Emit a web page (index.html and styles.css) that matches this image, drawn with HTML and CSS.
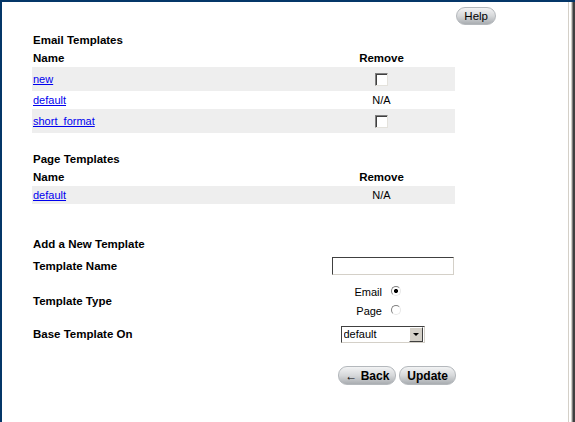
FILE: index.html
```html
<!DOCTYPE html>
<html lang="en">
<head>
    <meta charset="UTF-8">
    <title>Templates</title>
    <link rel="stylesheet" href="styles.css">
</head>
<body>

<div class="window">
    <div class="page">
        <div class="help-row">
            <button class="pill">Help</button>
        </div>

        <div class="section-title">Email Templates</div>
        <table class="list">
            <tr><th class="col-name">Name</th><th class="col-remove">Remove</th></tr>
            <tr class="shade"><td><a href="#">new</a></td><td class="c"><input type="checkbox" class="check"></td></tr>
            <tr class="text-row"><td><a href="#">default</a></td><td class="c">N/A</td></tr>
            <tr class="shade"><td><a href="#">short_format</a></td><td class="c"><input type="checkbox" class="check"></td></tr>
        </table>

        <div class="section-title page-title">Page Templates</div>
        <table class="list">
            <tr><th class="col-name">Name</th><th class="col-remove">Remove</th></tr>
            <tr class="shade text-row"><td><a href="#">default</a></td><td class="c">N/A</td></tr>
        </table>

        <div class="section-title add-title">Add a New Template</div>
        <form class="new-form" onsubmit="return false">
            <div class="form-row name-row">
                <label class="form-label">Template Name</label>
                <div class="form-control right"><input type="text" class="text-input"></div>
            </div>
            <div class="form-row type-row">
                <label class="form-label">Template Type</label>
                <div class="form-control">
                    <label class="radio-line">Email <input type="radio" name="type" class="radio" checked></label>
                    <label class="radio-line">Page <input type="radio" name="type" class="radio"></label>
                </div>
            </div>
            <div class="form-row base-row">
                <label class="form-label">Base Template On</label>
                <div class="form-control center">
                    <div class="select-box">
                        <select class="select">
                            <option>default</option>
                            <option>short_format</option>
                            <option>new</option>
                        </select>
                        <span class="select-btn"><span class="arrow"></span></span>
                    </div>
                </div>
            </div>
            <div class="button-row">
                <button type="button" class="pill bold back">&larr; Back</button>
                <button type="submit" class="pill bold">Update</button>
            </div>
        </form>
    </div>
    <div class="edge"></div>
</div>

</body>
</html>
```

FILE: styles.css
```css
html, body { margin: 0; padding: 0; background: #fff; }
body { font-family: "Liberation Sans", Arial, sans-serif; font-size: 11px; color: #000; }

.window { display: flex; height: 422px; box-sizing: border-box; border-top: 2px solid #043668; border-left: 2px solid #043668; }
.page { flex: 1; padding-left: 30px; }
.edge { flex: 0 0 7px; background: linear-gradient(to right, #d4d0c8 0 1px, #fff 1px 3px, #d4d0c8 3px 4px, #808080 4px 5px, #404040 5px 7px); }

.help-row { display: flex; justify-content: flex-end; padding-top: 5px; padding-right: 72px; }

.pill { height: 18px; padding: 0 7px; border: 1px solid #b4b8bc; border-radius: 9px; background: linear-gradient(#f2f3f4, #d6d8da 50%, #a9adb1); font-family: "Liberation Sans", Arial, sans-serif; font-size: 11.5px; color: #000; line-height: 16px; cursor: pointer; }
.pill.bold { font-weight: bold; font-size: 12px; height: 19px; padding: 0 7px; }
.pill.back { padding: 0 6px; }

.section-title { font-weight: bold; font-size: 11.5px; height: 18px; line-height: 18px; padding-left: 1px; margin-top: 6px; }
.page-title { margin-top: 17px; }
.add-title { margin-top: 31px; }

.list { width: 423px; border-collapse: collapse; }
.list th, .list td { padding: 0 1px; height: 18px; }
.list th { font-weight: bold; font-size: 11.5px; }
.col-name { text-align: left; width: 274px; }
.col-remove { text-align: center; }
.list .c { text-align: center; }
.shade td { background: #eeeeee; height: 24px; }
.shade.text-row td { height: 18px; }
.list a { color: #0000ee; }

.check { -webkit-appearance: none; appearance: none; display: block; width: 13px; height: 13px; margin: 0 auto; position: relative; left: 0; box-sizing: border-box; background: #fff; border: 1px solid; border-color: #808080 #e4e2dc #e4e2dc #808080; box-shadow: inset 1px 1px 0 #404040; }

.new-form { width: 424px; }
.form-row { display: flex; align-items: center; }
.form-label { flex: 0 0 275px; font-weight: bold; font-size: 11.5px; padding-left: 1px; }
.form-control { flex: 0 0 147px; display: flex; flex-direction: column; }
.form-control.right { align-items: flex-end; }
.form-control.center { align-items: center; }

.name-row { height: 22px; margin-top: 2px; }
.type-row { height: 38px; margin-top: 5px; }
.base-row { height: 20px; margin-top: 4px; }

.text-input { width: 122px; height: 18px; box-sizing: border-box; margin: 0 1px 0 0; padding: 1px 2px; border: 1px solid; border-color: #404040 #d4d0c8 #d4d0c8 #404040; box-shadow: inset -1px -1px 0 #fff, 1px 1px 0 #fff; font: 11px "Liberation Sans", Arial, sans-serif; }

.radio-line { display: flex; align-items: center; justify-content: flex-end; gap: 9px; height: 19px; padding-right: 54px; font-size: 11px; }
.radio { -webkit-appearance: none; appearance: none; width: 10px; height: 10px; margin: 0 0 2px 0; box-sizing: border-box; border-radius: 50%; border: 1px solid; border-color: #808080 #e8e8e8 #e8e8e8 #808080; background: #fff; }
.radio:checked { background: radial-gradient(circle, #000 0 1.8px, #fff 2.3px); }

.select-box { display: flex; width: 84px; height: 17px; box-sizing: border-box; margin-left: 2px; border: 1px solid; border-color: #404040 #d4d0c8 #d4d0c8 #404040; background: #fff; }
.select { -webkit-appearance: none; appearance: none; flex: 1; min-width: 0; border: 0; padding: 0 2px; margin: 0; background: #fff; font: 11px "Liberation Sans", Arial, sans-serif; color: #000; outline: none; }
.select-btn { flex: 0 0 14px; display: flex; align-items: center; justify-content: center; margin: 0 1px 0 0; background: #d4d0c8; border: 1px solid; border-color: #fff #404040 #404040 #fff; box-sizing: border-box; }
.arrow { width: 0; height: 0; border-left: 3px solid transparent; border-right: 3px solid transparent; border-top: 3px solid #000; }

.button-row { display: flex; justify-content: flex-end; gap: 3px; margin-top: 22px; }
```
